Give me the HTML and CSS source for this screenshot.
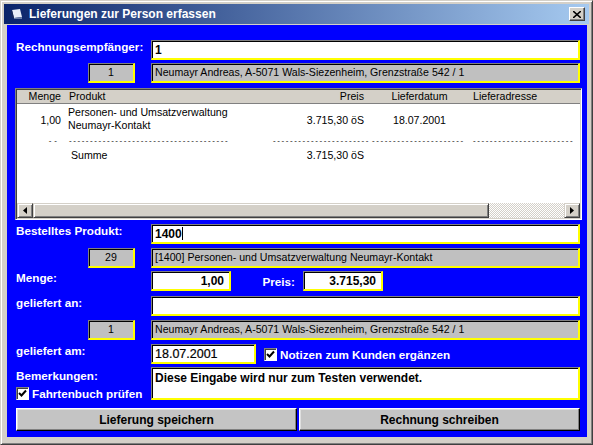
FILE: index.html
```html
<!DOCTYPE html>
<html lang="de">

<head>
    <meta charset="UTF-8">
    <title>Lieferungen zur Person erfassen</title>
    <link rel="stylesheet" href="styles.css">
</head>

<body>
    <div class="window">
        <div class="titlebar">
            <svg class="app-icon" width="12" height="10" viewBox="0 0 12 10">
                <polygon points="1,1 9,0 11,8 3,9" fill="#e8eef8" />
                <polygon points="1,1 3,9 1,9 0,3" fill="#1a2a5a" />
                <polygon points="3,9 11,8 11,10 3,10" fill="#6a7ea8" />
            </svg>
            <span class="title">Lieferungen zur Person erfassen</span>
            <div class="close">
                <svg width="8" height="7" viewBox="0 0 8 7">
                    <path d="M0 0 L8 7 M8 0 L0 7" stroke="#000" stroke-width="1.6" />
                </svg>
            </div>
        </div>

        <div class="client">
            <div class="row first">
                <div class="lbl">Rechnungsempfänger:</div>
                <div class="edit">1</div>
            </div>
            <div class="row tight">
                <div class="num">1</div>
                <div class="ro">Neumayr Andreas, A-5071 Wals-Siezenheim, Grenzstraße 542 / 1</div>
            </div>

            <div class="list">
                <table class="list-head">
                    <tr>
                        <td class="c1">Menge</td>
                        <td class="c2">Produkt</td>
                        <td class="c3">Preis</td>
                        <td class="c4">Lieferdatum</td>
                        <td class="c5">Lieferadresse</td>
                    </tr>
                </table>
                <div class="list-body">
                    <table>
                        <tr class="item">
                            <td class="c1">1,00</td>
                            <td class="c2">Personen- und Umsatzverwaltung<br>Neumayr-Kontakt</td>
                            <td class="c3">3.715,30 öS</td>
                            <td class="c4">18.07.2001</td>
                            <td class="c5"></td>
                        </tr>
                        <tr class="dashes">
                            <td class="c1">--</td>
                            <td class="c2">--------------------------------------</td>
                            <td class="c3">-----------------------</td>
                            <td class="c4">----------------------</td>
                            <td class="c5">------------------------</td>
                        </tr>
                        <tr class="sum">
                            <td class="c1"></td>
                            <td class="c2">&nbsp;Summe</td>
                            <td class="c3">3.715,30 öS</td>
                            <td class="c4"></td>
                            <td class="c5"></td>
                        </tr>
                    </table>
                </div>
                <div class="hscroll">
                    <div class="sb-btn">
                        <svg width="4" height="7" viewBox="0 0 4 7"><polygon points="4,0 4,7 0,3.5" fill="#000" /></svg>
                    </div>
                    <div class="sb-thumb"></div>
                    <div class="sb-track"></div>
                    <div class="sb-btn">
                        <svg width="4" height="7" viewBox="0 0 4 7"><polygon points="0,0 0,7 4,3.5" fill="#000" /></svg>
                    </div>
                </div>
            </div>

            <div class="row">
                <div class="lbl">Bestelltes Produkt:</div>
                <div class="edit">1400<span class="caret"></span></div>
            </div>
            <div class="row">
                <div class="num">29</div>
                <div class="ro">[1400] Personen- und Umsatzverwaltung Neumayr-Kontakt</div>
            </div>
            <div class="row tight">
                <div class="lbl">Menge:</div>
                <div class="edit short">1,00</div>
                <div class="lbl-inline">Preis:</div>
                <div class="edit short">3.715,30</div>
            </div>
            <div class="row wide">
                <div class="lbl">geliefert an:</div>
                <div class="edit"></div>
            </div>
            <div class="row">
                <div class="num">1</div>
                <div class="ro">Neumayr Andreas, A-5071 Wals-Siezenheim, Grenzstraße 542 / 1</div>
            </div>
            <div class="row">
                <div class="lbl">geliefert am:</div>
                <div class="edit date">18.07.2001</div>
                <div class="check">
                    <span class="box"><svg width="9" height="9" viewBox="0 0 9 9"><path d="M1 4 L3.5 6.5 L8 1.5" stroke="#000" stroke-width="2" fill="none" /></svg></span>
                    Notizen zum Kunden ergänzen
                </div>
            </div>
            <div class="row tight memo-row">
                <div class="lbl-col">
                    <div class="lbl">Bemerkungen:</div>
                    <div class="check">
                        <span class="box"><svg width="9" height="9" viewBox="0 0 9 9"><path d="M1 4 L3.5 6.5 L8 1.5" stroke="#000" stroke-width="2" fill="none" /></svg></span>
                        Fahrtenbuch prüfen
                    </div>
                </div>
                <div class="edit memo">Diese Eingabe wird nur zum Testen verwendet.</div>
            </div>
            <div class="buttons">
                <button class="btn">Lieferung speichern</button>
                <button class="btn">Rechnung schreiben</button>
            </div>
        </div>
    </div>
</body>

</html>
```

FILE: styles.css
```css
body {
    margin: 0;
    font-family: "Liberation Sans", Arial, sans-serif;
}

.window {
    width: 593px;
    height: 445px;
    box-sizing: border-box;
    background-color: #d4d0c8;
    border: 1px solid;
    border-color: #d4d0c8 #404040 #404040 #d4d0c8;
    box-shadow: inset 1px 1px #fff, inset -1px -1px #808080;
    padding: 3px;
    display: flex;
    flex-direction: column;
}

.titlebar {
    height: 20px;
    display: flex;
    align-items: center;
    background: linear-gradient(to right, #0a246a, #a6caf0);
}

.app-icon {
    margin-left: 7px;
    margin-right: 6px;
}

.title {
    flex: 1;
    color: #fff;
    font-weight: bold;
    font-size: 12px;
}

.close {
    width: 16px;
    height: 14px;
    box-sizing: border-box;
    margin-right: 4px;
    background-color: #d4d0c8;
    border: 1px solid;
    border-color: #fff #404040 #404040 #fff;
    box-shadow: inset -1px -1px #808080;
    display: flex;
    justify-content: center;
    align-items: center;
}

.client {
    height: 412px;
    margin: 1px 2px 0 3px;
    box-sizing: border-box;
    background-color: #0000ff;
    padding: 15px 7px 0 9px;
}

.row {
    display: flex;
    height: 20px;
    margin-top: 4px;
}

.row.first {
    margin-top: 0;
}

.row.tight {
    margin-top: 3px;
}

.row.wide {
    margin-top: 5px;
}

.lbl {
    width: 135px;
    flex-shrink: 0;
    color: #fff;
    font-weight: bold;
    font-size: 11.7px;
    line-height: 14px;
}

.lbl-inline {
    width: 72px;
    box-sizing: border-box;
    padding-right: 8px;
    padding-top: 4px;
    text-align: right;
    color: #fff;
    font-weight: bold;
    font-size: 11.7px;
}

/* sunken fields with yellow highlight */
.edit,
.ro,
.num {
    box-sizing: border-box;
    height: 20px;
    border-style: solid;
    border-width: 1px 2px 2px 1px;
    border-color: #808080 #ffff00 #ffff00 #808080;
    box-shadow: inset 1px 1px #000;
    white-space: nowrap;
    overflow: hidden;
}

.edit {
    flex: 1;
    background-color: #fff;
    padding: 2px 3px 0 3px;
    font-size: 12px;
    font-weight: bold;
    line-height: 15px;
}

.edit.short {
    flex: none;
    width: 80px;
    text-align: right;
    padding-right: 5px;
}

.edit.date {
    flex: none;
    width: 105px;
    font-weight: normal;
    font-size: 12.5px;
    -webkit-text-stroke: 0.2px #000;
}

.edit.memo {
    height: 33px;
    padding-top: 3px;
}

.caret {
    display: inline-block;
    width: 1px;
    height: 13px;
    background-color: #000;
    vertical-align: -2px;
}

.ro,
.num {
    background-color: #c0c0c0;
    font-size: 10.6px;
    line-height: 17px;
    padding-left: 3px;
}

.num {
    width: 47px;
    margin-left: 72px;
    margin-right: 16px;
    text-align: center;
    padding-left: 0;
}

.ro {
    flex: 1;
}

/* list view */
.list {
    height: 132px;
    margin: 5px -2px 0 -1px;
    box-sizing: border-box;
    border: 1px solid;
    border-color: #808080 #fff #fff #808080;
    box-shadow: inset 1px 1px #404040, inset -1px -1px #d4d0c8;
    padding: 1px;
    background-color: #fff;
    font-size: 10.6px;
    display: flex;
    flex-direction: column;
}

.list table {
    border-collapse: collapse;
    table-layout: fixed;
    width: 563px;
}

.list td {
    padding: 0;
    white-space: nowrap;
    overflow: hidden;
}

.list-head {
    background-color: #d4d0c8;
    height: 14px;
    border-bottom: 1px solid #808080;
}

.list-head td {
    line-height: 13px;
}

.c1 {
    width: 48px;
    text-align: right;
    padding-right: 4px !important;
    box-sizing: border-box;
}

.c2 {
    width: 169px;
    padding-left: 3px !important;
    box-sizing: border-box;
}

.c3 {
    width: 136px;
    text-align: right;
    padding-right: 6px !important;
    box-sizing: border-box;
}

.c4 {
    width: 99px;
    text-align: center;
}

.c5 {
    padding-left: 4px !important;
}

.list-head .c2 {
    padding-left: 4px !important;
}

.list-body {
    flex: 1;
    padding-top: 2px;
}

.item td {
    line-height: 13px;
    height: 28px;
    vertical-align: top;
}

.item .c1,
.item .c3,
.item .c4 {
    vertical-align: middle;
}

/* separator line before the sum, written as hyphens */
.dashes td {
    height: 14px;
    line-height: 14px;
    font-size: 8px;
    letter-spacing: 1.55px;
    color: #000;
}

.dashes .c1 {
    padding-right: 5px !important;
    letter-spacing: 3px;
}

.dashes .c2 {
    padding-left: 4px !important;
}

.dashes .c3 {
    padding-right: 0 !important;
}

.dashes .c4 {
    text-align: left;
    padding-left: 2px;
}

.sum td {
    height: 14px;
    line-height: 14px;
    vertical-align: middle;
}

.hscroll {
    height: 15px;
    display: flex;
}

.sb-btn,
.sb-thumb {
    box-sizing: border-box;
    background-color: #d4d0c8;
    border: 1px solid;
    border-color: #d4d0c8 #404040 #404040 #d4d0c8;
    box-shadow: inset 1px 1px #fff, inset -1px -1px #808080;
}

.sb-btn {
    width: 16px;
    display: flex;
    justify-content: center;
    align-items: center;
}

.sb-thumb {
    width: 456px;
}

.sb-track {
    flex: 1;
    background: repeating-conic-gradient(#d4d0c8 0 25%, #fff 0 50%) 0 0 / 2px 2px;
}

/* checkboxes */
.check {
    display: flex;
    align-items: center;
    color: #fff;
    font-weight: bold;
    font-size: 11.7px;
    white-space: nowrap;
}

.row > .check {
    margin-left: 8px;
    height: 20px;
}

.box {
    width: 13px;
    height: 13px;
    box-sizing: border-box;
    margin-right: 3px;
    background-color: #fff;
    border: 1px solid;
    border-color: #808080 #fff #fff #808080;
    box-shadow: inset 1px 1px #404040;
    display: flex;
    justify-content: center;
    align-items: center;
}

.memo-row {
    height: 33px;
}

.lbl-col {
    width: 135px;
    flex-shrink: 0;
    display: flex;
    flex-direction: column;
    justify-content: space-between;
    padding-top: 2px;
    box-sizing: border-box;
}

.buttons {
    display: flex;
    gap: 2px;
    margin-top: 8px;
}

.btn {
    flex: 1;
    height: 23px;
    background-color: #c4c4c4;
    border: 1px solid;
    border-color: #fff #000 #000 #fff;
    box-shadow: inset -1px -1px #808080, inset 1px 1px #dfdfdf;
    font-family: "Liberation Sans", Arial, sans-serif;
    font-weight: bold;
    font-size: 12px;
    color: #000;
    padding: 0;
}
```
